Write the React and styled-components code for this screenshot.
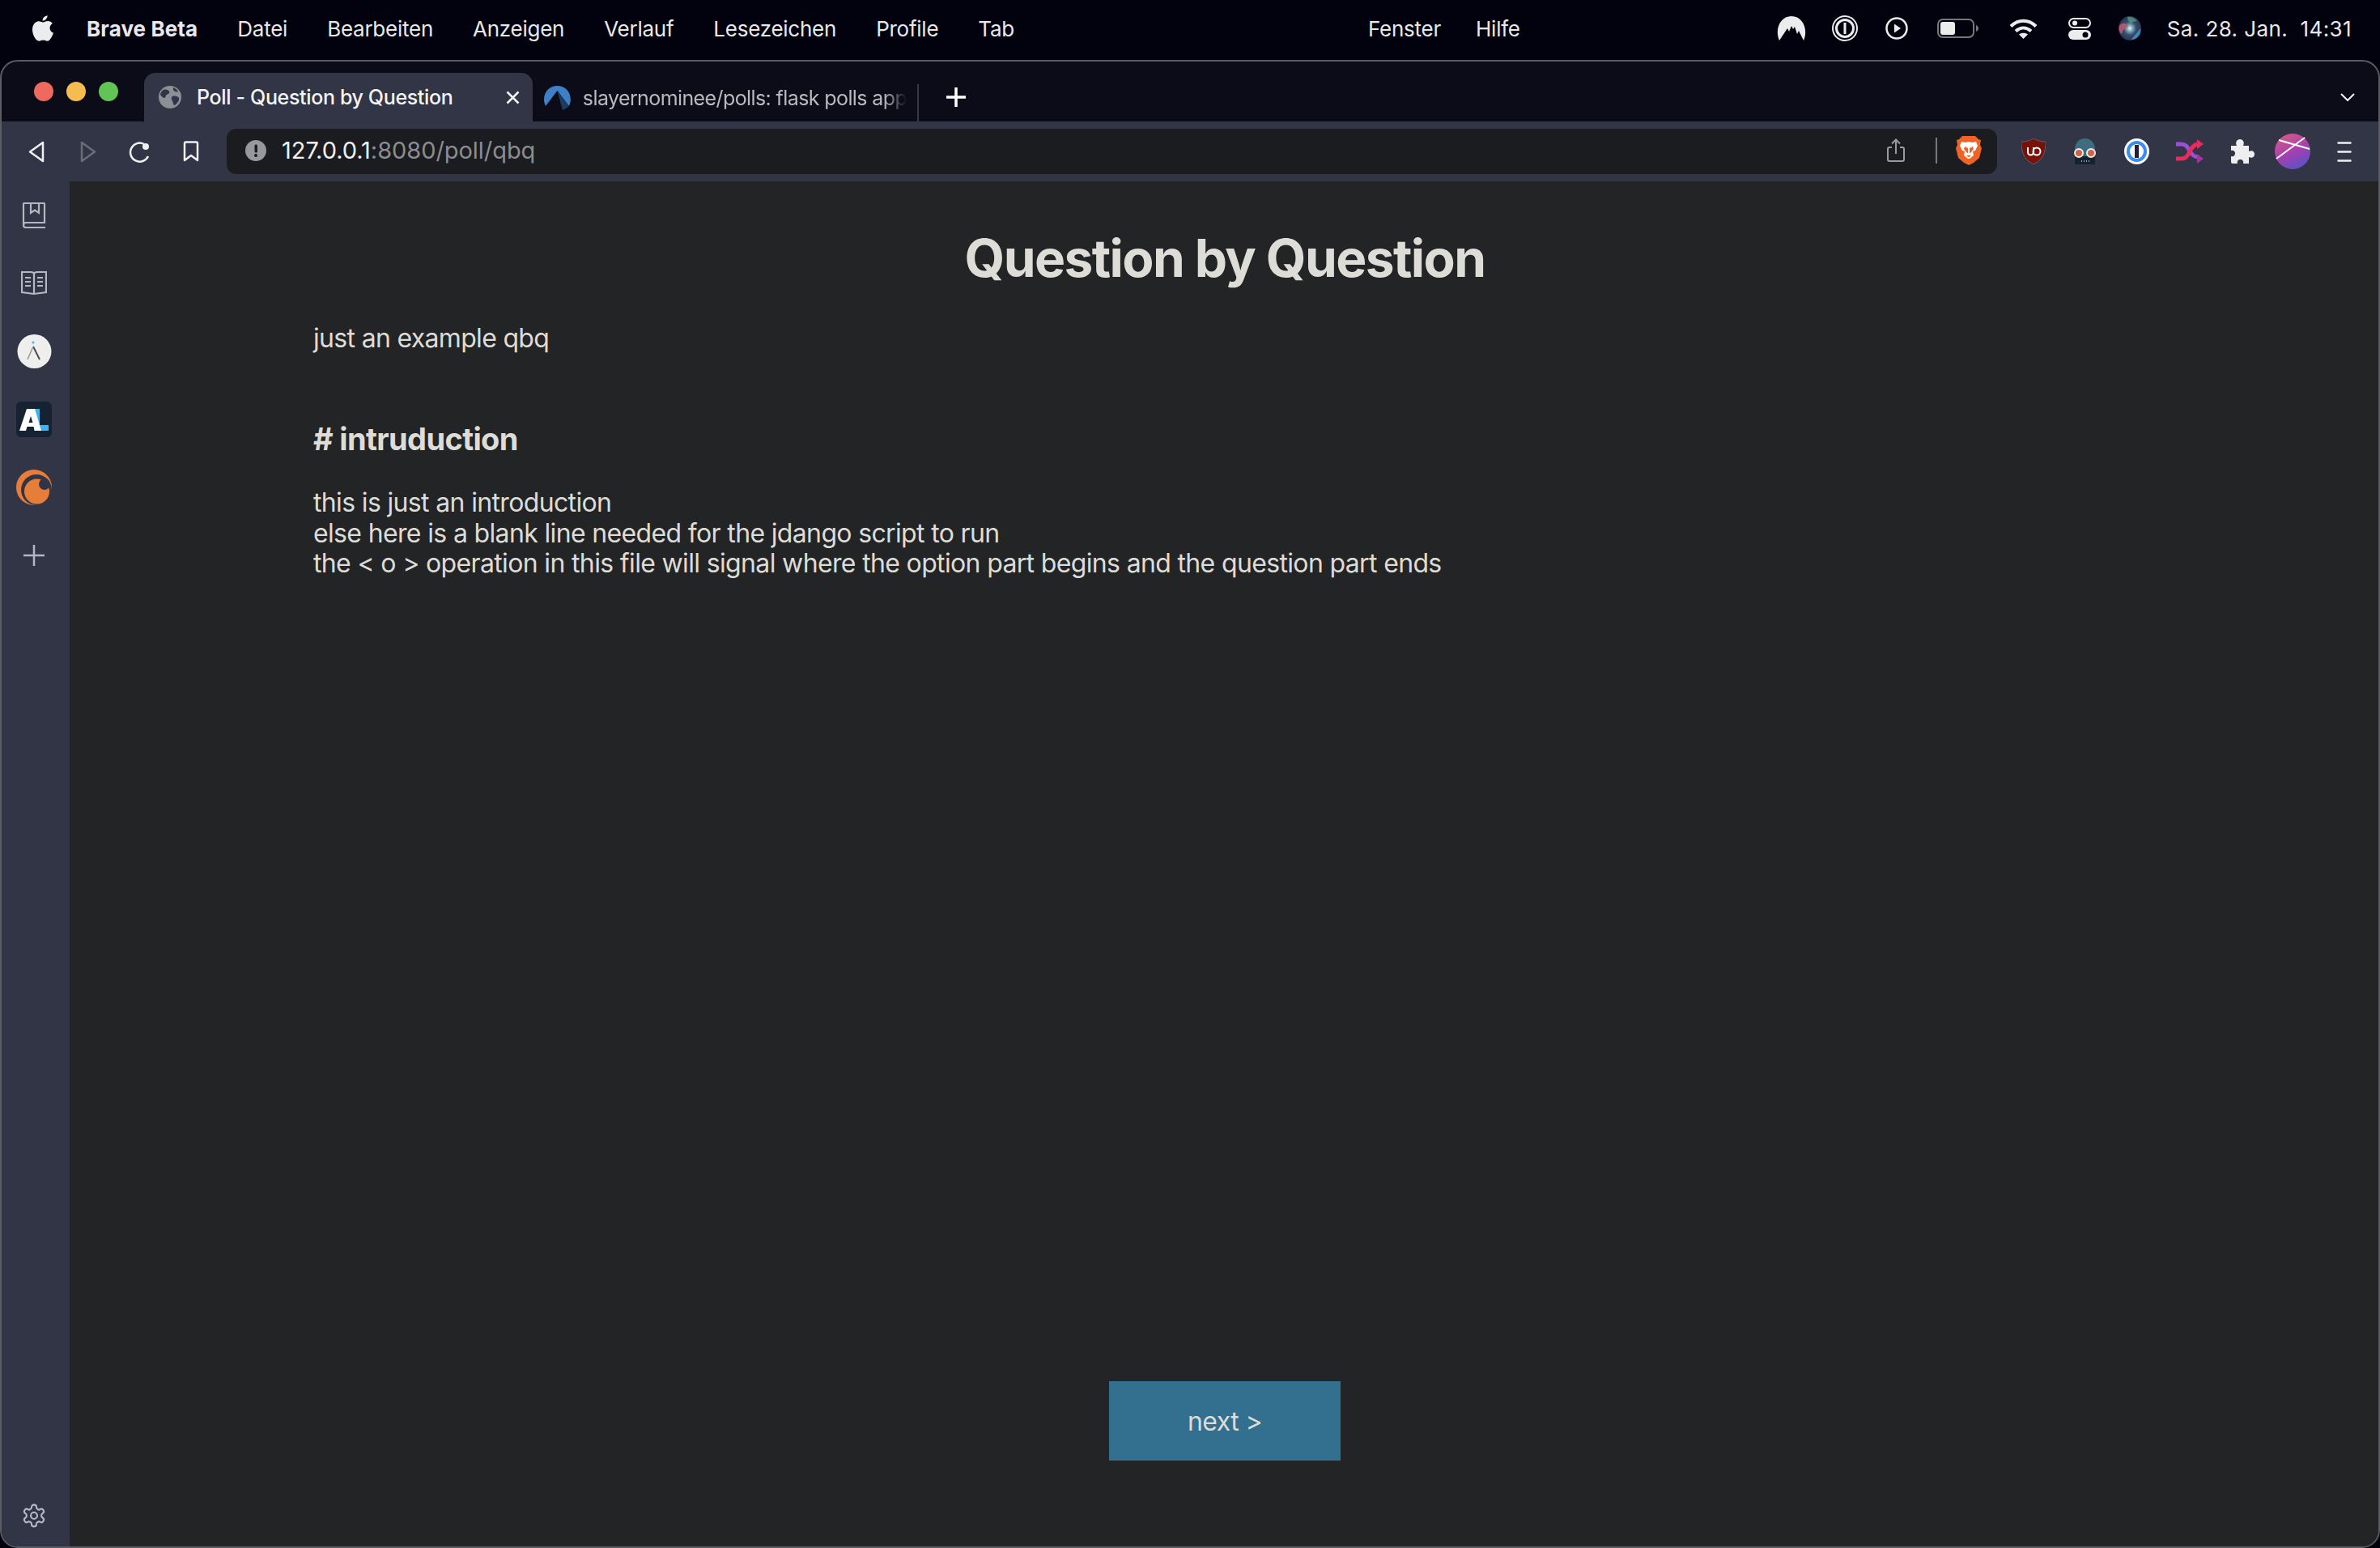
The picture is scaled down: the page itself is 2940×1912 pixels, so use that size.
import styled, { createGlobalStyle } from "styled-components";

const GlobalStyle = createGlobalStyle`
  html, body {
    margin: 0;
    padding: 0;
    background: #02020f;
  }
  * {
    box-sizing: border-box;
  }
`;

const Page = styled.div`
  width: 2940px;
  height: 1912px;
  overflow: hidden;
  display: flex;
  flex-direction: column;
  background: #02020f;
  font-family: Inter, "Liberation Sans", sans-serif;
`;

const MenuBar = styled.div`
  height: 74px;
  flex: none;
  display: grid;
  grid-template-columns: 1650px auto 1fr;
  align-items: center;
  padding: 0 35px 4px 40px;
  color: #e8e8ea;
  font-size: 26px;
  letter-spacing: -0.25px;
`;

const MenuGroup = styled.div`
  display: flex;
  align-items: center;
  gap: ${(p) => p.$gap}px;
`;

const MenuItem = styled.span`
  font-weight: ${(p) => (p.$bold ? 700 : 400)};
  letter-spacing: ${(p) => (p.$bold ? "0.1px" : "inherit")};
  white-space: nowrap;
`;

const StatusGroup = styled.div`
  display: flex;
  align-items: center;
  justify-content: flex-end;
`;

const StatusItem = styled.span`
  display: flex;
  margin-left: ${(p) => p.$left}px;
`;

const Clock = styled.span`
  margin-left: 32px;
  white-space: pre;
  letter-spacing: 0.4px;
`;

const BrowserWindow = styled.div`
  flex: 1;
  min-height: 0;
  display: flex;
  flex-direction: column;
  border: 2px solid #5a5b63;
  border-radius: 22px;
  overflow: hidden;
  background: #0b0c17;
`;

const TabStrip = styled.div`
  height: 74px;
  flex: none;
  display: flex;
  align-items: flex-end;
  padding: 0 29px 0 40px;
`;

const Lights = styled.div`
  display: flex;
  gap: 16px;
  width: 136px;
  align-self: flex-start;
  padding-top: 25px;
`;

const Light = styled.span`
  width: 24px;
  height: 24px;
  border-radius: 50%;
  background: ${(p) => p.$color};
`;

const ActiveTab = styled.div`
  width: 480px;
  height: 60px;
  display: flex;
  align-items: center;
  padding: 0 16px 0 18px;
  gap: 19px;
  background: #323545;
  border-radius: 14px 14px 0 0;
  color: #f4f4f6;
  font-size: 25px;
  font-weight: 500;
  letter-spacing: -0.35px;
  white-space: nowrap;
`;

const TabTitle = styled.span`
  flex: 1;
`;

const InactiveTab = styled.div`
  width: 477px;
  height: 46px;
  display: flex;
  align-items: center;
  align-self: flex-end;
  padding: 0 13px 12px 14px;
  gap: 15px;
  border-right: 2px solid #36373f;
  color: #b9bac0;
  font-size: 25px;
  letter-spacing: -0.6px;
  white-space: nowrap;
  overflow: hidden;
`;

const FadedTitle = styled.span`
  width: 402px;
  overflow: hidden;
  -webkit-mask-image: linear-gradient(to right, #000 93%, transparent);
  mask-image: linear-gradient(to right, #000 93%, transparent);
`;

const NewTab = styled.div`
  margin: 0 0 18px 34px;
  display: flex;
`;

const TabMenu = styled.div`
  margin: 0 0 25px auto;
  display: flex;
`;

const Toolbar = styled.div`
  height: 74px;
  flex: none;
  display: flex;
  align-items: center;
  padding: 0 33px;
  background: #323545;
`;

const NavButtons = styled.div`
  width: 245px;
  flex: none;
  display: flex;
  align-items: center;
  gap: 40px;
`;

const ForwardSlot = styled.span`
  display: flex;
  margin-left: 4px;
`;

const UrlBox = styled.div`
  width: 2187px;
  height: 56px;
  flex: none;
  display: flex;
  align-items: center;
  padding: 0 19px 3px 23px;
  border-radius: 12px;
  background: #1b1c20;
  font-size: 29px;
  letter-spacing: -0.05px;
`;

const UrlHost = styled.span`
  margin-left: 19px;
  color: #f1f1f3;
`;

const UrlPath = styled.span`
  color: #8c8d92;
  flex: 1;
`;

const UrlDivider = styled.span`
  width: 2px;
  height: 32px;
  margin: 0 23px 0 38px;
  background: #77787d;
`;

const Extensions = styled.div`
  display: flex;
  flex: none;
  align-items: center;
  margin-left: 30px;
  gap: 33px;
`;

const AvatarSlot = styled.span`
  display: flex;
  margin-left: -8px;
`;

const Body = styled.div`
  flex: 1;
  min-height: 0;
  display: flex;
`;

const Sidebar = styled.div`
  width: 84px;
  flex: none;
  display: flex;
  flex-direction: column;
  padding-right: 4px;
  background: #323545;
`;

const SideSlot = styled.div`
  height: 84px;
  display: flex;
  align-items: center;
  justify-content: center;
`;

const SideBottom = styled.div`
  margin-top: auto;
  padding-bottom: 22px;
  display: flex;
  justify-content: center;
`;

const Content = styled.main`
  flex: 1;
  display: flex;
  flex-direction: column;
  padding: 56px 0 106px 301px;
  background: #232426;
  color: #dddcd7;
`;

const Title = styled.h1`
  margin: 0 0 0 -299px;
  font-size: 64px;
  line-height: 78px;
  font-weight: 700;
  letter-spacing: -1.6px;
  text-align: center;
`;

const Intro = styled.p`
  margin: 41px 0 0;
  font-size: 32px;
  line-height: 38px;
  letter-spacing: -0.68px;
`;

const SectionTitle = styled.h2`
  margin: 82px 0 0;
  font-size: 38px;
  line-height: 46px;
  font-weight: 700;
  letter-spacing: -0.65px;
`;

const Lines = styled.p`
  margin: 37px 0 0;
  font-size: 32px;
  line-height: 37.5px;
  letter-spacing: -0.65px;
`;

const NextButton = styled.button`
  margin: auto 0 0 -299px;
  align-self: center;
  width: 286px;
  height: 98px;
  border: none;
  background: #336f8e;
  color: #dddcd7;
  font-family: inherit;
  font-size: 32px;
  letter-spacing: -0.6px;
`;

const Apple = () => (
  <svg width="26" height="32" viewBox="0 0 28 34" fill="#ececee">
    <path d="M20 0c.3 3-2.600 7-6.400 6.800C13.200 3.500 16.400.300 20 0zM14 9c1.600 0 3.600-1.800 6.600-1.800 2.400 0 4.800 1.200 6.200 3.300-5.400 3-4.500 10.600 1.200 12.700-1.400 3.800-4.600 10.800-8 10.800-2 0-3-1.300-5.600-1.300-2.700 0-3.700 1.300-5.600 1.300C4.800 34 0 25.800 0 19 0 12 4.200 7.600 8.400 7.600 10.800 7.600 12.700 9 14 9z" />
  </svg>
);

const NordIcon = () => (
  <svg width="36" height="30" viewBox="0 0 36 30">
    <path fill="#ececee" d="M3 30C-3 16 4 0 18 0s21 16 15 30l-6-12-2 4-3-9-2 3-2-4-3 7-2-4z" />
  </svg>
);

const OnePassBar = () => (
  <svg width="32" height="32" viewBox="0 0 32 32" fill="none" stroke="#ececee">
    <circle cx="16" cy="16" r="15" strokeWidth="2" />
    <circle cx="16" cy="16" r="10.5" strokeWidth="3" />
    <rect x="14.5" y="9" width="3" height="14" fill="#ececee" strokeWidth="0" />
  </svg>
);

const PlayCircle = () => (
  <svg width="28" height="28" viewBox="0 0 28 28">
    <circle cx="14" cy="14" r="12.5" fill="none" stroke="#ececee" strokeWidth="2.5" />
    <path d="M11 8.5l8 5.500-8 5.500z" fill="#ececee" />
  </svg>
);

const Battery = () => (
  <svg width="51" height="24" viewBox="0 0 51 24">
    <rect x="1" y="1" width="44" height="22" rx="6" fill="none" stroke="#77787d" strokeWidth="2" />
    <rect x="4" y="4" width="18" height="16" rx="3" fill="#ececee" />
    <path d="M48 8c2 1 3 2 3 4s-1 3-3 4z" fill="#77787d" />
  </svg>
);

const Wifi = () => (
  <svg width="35" height="25" viewBox="0 0 35 25" fill="none" stroke="#ececee" strokeWidth="4">
    <path d="M2 9.5c9-9 22-9 31 0" />
    <path d="M8 15.5c6-5.500 13-5.500 19 0" />
    <path d="M17.5 25l-5.500-5.500c3-2.500 8-2.500 11 0z" fill="#ececee" stroke="none" />
  </svg>
);

const ControlCenter = () => (
  <svg width="28" height="27" viewBox="0 0 28 27">
    <rect x="1" y="1" width="26" height="11" rx="5.5" fill="none" stroke="#ececee" strokeWidth="2" />
    <circle cx="8" cy="6.5" r="3" fill="#ececee" />
    <rect y="15" width="28" height="12" rx="6" fill="#ececee" />
    <circle cx="21" cy="21" r="3.5" fill="#02020f" />
  </svg>
);

const Siri = () => (
  <svg width="28" height="30" viewBox="0 0 28 30">
    <defs>
      <radialGradient id="siri" cx="50%" cy="50%" r="55%">
        <stop offset="0" stopColor="#f0f4f6" />
        <stop offset="0.18" stopColor="#8fb8c8" />
        <stop offset="0.5" stopColor="#34506e" />
        <stop offset="1" stopColor="#2a2f4c" />
      </radialGradient>
    </defs>
    <ellipse cx="14" cy="15" rx="14" ry="15" fill="url(#siri)" />
    <path d="M1 12c4-5 8-4 11 1-4 1-7 4-8 9-3-2-4-6-3-10z" fill="#c2576f" opacity="0.9" />
    <path d="M16 29c3-5 7-8 11-14 2 7-4 14-11 14z" fill="#3f8fc4" opacity="0.9" />
    <path d="M11 1c4-1 9 1 12 5-3 0-6 1-8 3-2-2-4-4-4-8z" fill="#4f9a7d" opacity="0.8" />
  </svg>
);

const Globe = () => (
  <svg width="28" height="28" viewBox="0 0 28 28">
    <circle cx="14" cy="14" r="14" fill="#8d8f97" />
    <path d="M6 5c3-1 6 0 7 2s-1 3-3 4-1 4-3 4-4-3-5-4c0-2 2-5 4-6zM17 13c3-1 7 0 8 2s-2 7-5 9c-2 0-2-3-3-5s-2-5 0-6zM18 2c3 1 5 3 6 5-2 1-5 0-6-2z" fill="#323545" />
  </svg>
);

const CloseX = () => (
  <svg width="17" height="17" viewBox="0 0 17 17" stroke="#f4f4f6" strokeWidth="2.5">
    <path d="M1.500 1.500l14 14M15.500 1.500l-14 14" />
  </svg>
);

const PeakIcon = () => (
  <svg width="33" height="30" viewBox="0 0 33 30">
    <path d="M0 17C0 7 7 0 16.500 0S33 7 33 17c0 3-1 6-2 8L16.500 6 2 25c-1-2-2-5-2-8z" fill="#3e80c8" />
    <path d="M16.500 6L31 25c-2 2-5 4-8 5z" fill="#1e3a5e" />
  </svg>
);

const Plus = () => (
  <svg width="24" height="24" viewBox="0 0 24 24" stroke="#fff" strokeWidth="3.5">
    <path d="M12 0v24M0 12h24" />
  </svg>
);

const Chevron = () => (
  <svg width="18" height="10" viewBox="0 0 18 10" fill="none" stroke="#f4f4f6" strokeWidth="2">
    <path d="M1 1l8 8 8-8" />
  </svg>
);

const Back = ({ dim, flip }) => (
  <svg width="20" height="27" viewBox="0 0 20 27" fill="none" stroke={dim ? "#6b6d78" : "#f0f0f2"} strokeWidth="2.5" strokeLinejoin="round">
    {flip ? <path d="M2 2l16 11.500L2 25z" /> : <path d="M18 2L2 13.500 18 25z" />}
  </svg>
);

const Reload = () => (
  <svg width="27" height="27" viewBox="0 0 27 27" fill="none" stroke="#f0f0f2" strokeWidth="2.5">
    <path d="M24 19a11.500 11.500 0 1 1-5-15" />
    <circle cx="21" cy="7" r="4" fill="#f0f0f2" stroke="none" />
  </svg>
);

const Bookmark = () => (
  <svg width="20" height="26" viewBox="0 0 20 26" fill="none" stroke="#f0f0f2" strokeWidth="2.5" strokeLinejoin="round">
    <path d="M2 3a1.500 1.500 0 0 1 1.500-1.500h13A1.500 1.500 0 0 1 18 3v21l-8-6-8 6z" />
  </svg>
);

const InfoDot = () => (
  <svg width="26" height="26" viewBox="0 0 26 26">
    <circle cx="13" cy="13" r="13" fill="#97989d" />
    <rect x="11.5" y="5.5" width="3.5" height="10" rx="1.5" fill="#1b1c20" />
    <circle cx="13" cy="19" r="2" fill="#1b1c20" />
  </svg>
);

const ShareIcon = () => (
  <svg width="22" height="29" viewBox="0 0 22 29" fill="none" stroke="#9a9ba0" strokeWidth="2">
    <path d="M6 11H3a2 2 0 0 0-2 2v13a2 2 0 0 0 2 2h16a2 2 0 0 0 2-2V13a2 2 0 0 0-2-2h-3" />
    <path d="M11 19V2M6 6.500L11 1.500l5 5" />
  </svg>
);

const BraveLion = () => (
  <svg width="32" height="36" viewBox="0 0 32 36">
    <path d="M8 0h16l4 4 3 1-1 6 2 4-3 12-7 6-6 3-6-3-7-6L0 15l2-4-1-6 3-1z" fill="#ee6326" />
    <path d="M7 7l5 1 4-1 4 1 5-1 2 5-3 6-3 1 1 5-5 4h-2l-5-4 1-5-3-1-3-6z" fill="#fff" />
    <path d="M11 13l4 2v6h-1l-4-5zM21 13l-4 2v6h1l4-5zM13 24h6l-3 2.500z" fill="#ee6326" />
  </svg>
);

const UBlock = () => (
  <svg width="30" height="32" viewBox="0 0 30 32">
    <path d="M15 0c3 2 8 4 15 4 0 13-3 22-15 28C3 26 0 17 0 4c7 0 12-2 15-4z" fill="#7a1109" stroke="#5f5f6a" strokeWidth="1" />
    <path d="M8 11v6a3.500 3.500 0 0 0 7 0v-6" fill="none" stroke="#fff" strokeWidth="2" />
    <circle cx="19" cy="16" r="4.5" fill="none" stroke="#fff" strokeWidth="2" />
  </svg>
);

const Ghostery = () => (
  <svg width="31" height="32" viewBox="0 0 31 32">
    <path d="M3 32V14C3 6 8 0 15.500 0S28 6 28 14v18z" fill="#3f6d7f" />
    <rect x="3" y="22" width="25" height="10" fill="#14242d" />
    <circle cx="8" cy="18" r="5" fill="#c9674a" stroke="#f2e9e2" strokeWidth="2" />
    <circle cx="23" cy="18" r="5" fill="#c9674a" stroke="#f2e9e2" strokeWidth="2" />
    <path d="M11 28h1M14 28h1M17 28h1M20 28h1" stroke="#8fb0bd" strokeWidth="2" />
  </svg>
);

const OnePassColor = () => (
  <svg width="31" height="32" viewBox="0 0 31 32">
    <ellipse cx="15.5" cy="16" rx="15.5" ry="16" fill="#fff" />
    <ellipse cx="15.5" cy="16" rx="12.5" ry="13" fill="#3b8cf0" />
    <ellipse cx="15.5" cy="16" rx="8.5" ry="9" fill="#fff" />
    <rect x="13" y="8" width="5" height="16" fill="#20232c" />
  </svg>
);

const Shuffle = () => (
  <svg width="34" height="30" viewBox="0 0 34 30" fill="none" strokeWidth="5">
    <path d="M0 6h6c6 0 8 3 10 7s5 9 12 9" stroke="#9c4fd6" />
    <path d="M0 24h6c6 0 8-3 10-7s5-11 12-11" stroke="#e62c5e" />
    <path d="M26 0l8 6-8 6z" fill="#e62c5e" />
    <path d="M26 18l8 6-8 6z" fill="#a3339f" />
  </svg>
);

const Puzzle = () => (
  <svg width="30" height="30" viewBox="0 0 30 30">
    <path d="M1 8h7c-2-4 0-8 4-8s6 4 4 8h7v7c4-2 7 0 7 3.500S27 24 23 22v8h-7c1-3-1-5-3.500-5S8 27 9 30H3a2 2 0 0 1-2-2v-7c3 1 5-1 5-3.500S4 13 1 14z" fill="#eeeeee" />
  </svg>
);

const Avatar = () => (
  <svg width="44" height="44" viewBox="0 0 44 44">
    <defs>
      <linearGradient id="avatar" x1="0.25" y1="0" x2="0.75" y2="1">
        <stop offset="0" stopColor="#d85a86" />
        <stop offset="0.5" stopColor="#a63fb0" />
        <stop offset="1" stopColor="#5654c6" />
      </linearGradient>
    </defs>
    <circle cx="22" cy="22" r="22" fill="url(#avatar)" />
    <path d="M5 8l38 11M2 31L37 5" stroke="#fff" strokeWidth="2" fill="none" />
  </svg>
);

const Hamburger = () => (
  <svg width="18" height="25" viewBox="0 0 18 25" stroke="#f0f0f2" strokeWidth="2.5" strokeLinecap="round">
    <path d="M1.500 1.500h15M1.500 12.500h15M1.500 23.500h15" />
  </svg>
);

const BookSaved = () => (
  <svg width="30" height="32" viewBox="0 0 30 32" fill="none" stroke="#b4b6c0" strokeWidth="2.2">
    <path d="M2 27V2a1 1 0 0 1 1-1h24a1 1 0 0 1 1 1v23H5a3 3 0 0 0-3 3 3 3 0 0 0 3 3h24" />
    <path d="M11 1v12l5-3.500 5 3.500V1" />
  </svg>
);

const BookOpen = () => (
  <svg width="32" height="32" viewBox="0 0 32 32" fill="none" stroke="#b4b6c0" strokeWidth="2.2">
    <path d="M16 29L1 27V2h11c2 0 4 1 4 3 0-2 2-3 4-3h11v25z" />
    <path d="M16 5v24M5 9h7M5 14h7M5 19h7M20 9h7M20 14h7M20 19h7" />
  </svg>
);

const LambdaBadge = () => (
  <svg width="43" height="42" viewBox="0 0 43 42">
    <circle cx="21.5" cy="21" r="21" fill="#eeeeec" />
    <circle cx="20" cy="10" r="1.5" fill="#38b6f0" />
    <path d="M20 15l8 16" stroke="#4b4b4f" strokeWidth="2" />
    <path d="M20 15l-7 16" stroke="#98989b" strokeWidth="1.5" />
  </svg>
);

const AniListBadge = () => (
  <svg width="44" height="44" viewBox="0 0 44 44">
    <rect width="44" height="44" rx="6" fill="#152232" />
    <path d="M22 9h7v20h11v7H22z" fill="#3db4f2" />
    <path fillRule="evenodd" d="M13 9h10l8 27h-8l-1.500-5h-8L12 36H4zM18 18l-2.500 8h5z" fill="#fff" />
  </svg>
);

const Crunchyroll = () => (
  <svg width="44" height="44" viewBox="0 0 44 44">
    <circle cx="22" cy="22" r="22" fill="#e67e3a" />
    <circle cx="25" cy="25" r="19" fill="#323545" />
    <circle cx="25.500" cy="27" r="15.5" fill="#e67e3a" />
    <circle cx="35" cy="18" r="7" fill="#323545" />
  </svg>
);

const SidePlus = () => (
  <svg width="26" height="26" viewBox="0 0 26 26" stroke="#b4b6c0" strokeWidth="2.5">
    <path d="M13 0v26M0 13h26" />
  </svg>
);

const Gear = () => (
  <svg width="32" height="32" viewBox="0 0 24 24" fill="none" stroke="#b4b6c0" strokeWidth="1.6" strokeLinecap="round" strokeLinejoin="round">
    <path d="M12.220 2h-.44a2 2 0 0 0-2 2v.18a2 2 0 0 1-1 1.730l-.43.250a2 2 0 0 1-2 0l-.15-.080a2 2 0 0 0-2.730.730l-.220.380a2 2 0 0 0 .730 2.730l.150.100a2 2 0 0 1 1 1.720v.510a2 2 0 0 1-1 1.740l-.150.090a2 2 0 0 0-.730 2.730l.220.380a2 2 0 0 0 2.730.730l.150-.080a2 2 0 0 1 2 0l.430.250a2 2 0 0 1 1 1.730V20a2 2 0 0 0 2 2h.44a2 2 0 0 0 2-2v-.180a2 2 0 0 1 1-1.730l.430-.250a2 2 0 0 1 2 0l.150.080a2 2 0 0 0 2.730-.730l.220-.390a2 2 0 0 0-.730-2.730l-.150-.080a2 2 0 0 1-1-1.740v-.500a2 2 0 0 1 1-1.740l.150-.090a2 2 0 0 0 .730-2.730l-.220-.380a2 2 0 0 0-2.730-.730l-.150.080a2 2 0 0 1-2 0l-.430-.250a2 2 0 0 1-1-1.730V4a2 2 0 0 0-2-2z" />
    <circle cx="12" cy="12" r="3" />
  </svg>
);

export default function App() {
  return (
    <Page>
      <GlobalStyle />
      <MenuBar>
        <MenuGroup $gap={41}>
          <Apple />
          <MenuGroup $gap={49}>
            <MenuItem $bold>Brave Beta</MenuItem>
            <MenuItem>Datei</MenuItem>
            <MenuItem>Bearbeiten</MenuItem>
            <MenuItem>Anzeigen</MenuItem>
            <MenuItem>Verlauf</MenuItem>
            <MenuItem>Lesezeichen</MenuItem>
            <MenuItem>Profile</MenuItem>
            <MenuItem>Tab</MenuItem>
          </MenuGroup>
        </MenuGroup>
        <MenuGroup $gap={43}>
          <MenuItem>Fenster</MenuItem>
          <MenuItem>Hilfe</MenuItem>
        </MenuGroup>
        <StatusGroup>
          <StatusItem $left={0}><NordIcon /></StatusItem>
          <StatusItem $left={32}><OnePassBar /></StatusItem>
          <StatusItem $left={34}><PlayCircle /></StatusItem>
          <StatusItem $left={36}><Battery /></StatusItem>
          <StatusItem $left={38}><Wifi /></StatusItem>
          <StatusItem $left={38}><ControlCenter /></StatusItem>
          <StatusItem $left={34}><Siri /></StatusItem>
          <Clock>Sa. 28. Jan.  14:31</Clock>
        </StatusGroup>
      </MenuBar>
      <BrowserWindow>
        <TabStrip>
          <Lights>
            <Light $color="#ee6a5f" />
            <Light $color="#f5bd4f" />
            <Light $color="#61c454" />
          </Lights>
          <ActiveTab>
            <Globe />
            <TabTitle>Poll - Question by Question</TabTitle>
            <CloseX />
          </ActiveTab>
          <InactiveTab>
            <PeakIcon />
            <FadedTitle>slayernominee/polls: flask polls app</FadedTitle>
          </InactiveTab>
          <NewTab>
            <Plus />
          </NewTab>
          <TabMenu>
            <Chevron />
          </TabMenu>
        </TabStrip>
        <Toolbar>
          <NavButtons>
            <Back />
            <ForwardSlot><Back dim flip /></ForwardSlot>
            <Reload />
            <Bookmark />
          </NavButtons>
          <UrlBox>
            <InfoDot />
            <UrlHost>127.0.0.1</UrlHost>
            <UrlPath>:8080/poll/qbq</UrlPath>
            <ShareIcon />
            <UrlDivider />
            <BraveLion />
          </UrlBox>
          <Extensions>
            <UBlock />
            <Ghostery />
            <OnePassColor />
            <Shuffle />
            <Puzzle />
            <AvatarSlot><Avatar /></AvatarSlot>
            <Hamburger />
          </Extensions>
        </Toolbar>
        <Body>
          <Sidebar>
            <SideSlot><BookSaved /></SideSlot>
            <SideSlot><BookOpen /></SideSlot>
            <SideSlot><LambdaBadge /></SideSlot>
            <SideSlot><AniListBadge /></SideSlot>
            <SideSlot><Crunchyroll /></SideSlot>
            <SideSlot><SidePlus /></SideSlot>
            <SideBottom><Gear /></SideBottom>
          </Sidebar>
          <Content>
            <Title>Question by Question</Title>
            <Intro>just an example qbq</Intro>
            <SectionTitle># intruduction</SectionTitle>
            <Lines>
              this is just an introduction
              <br />
              else here is a blank line needed for the jdango script to run
              <br />
              the &lt; o &gt; operation in this file will signal where the option part begins and the question part ends
            </Lines>
            <NextButton>next &gt;</NextButton>
          </Content>
        </Body>
      </BrowserWindow>
    </Page>
  );
}
